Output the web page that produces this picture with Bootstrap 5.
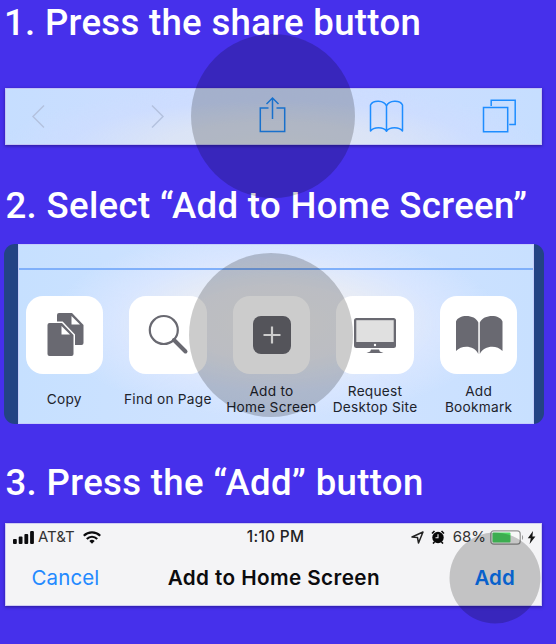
<!DOCTYPE html>
<html lang="en">
<head>
<meta charset="utf-8">
<meta name="viewport" content="width=device-width, initial-scale=1">
<title>Add to Home Screen</title>
<link href="https://cdn.jsdelivr.net/npm/bootstrap@5.3.0/dist/css/bootstrap.min.css" rel="stylesheet">
<style>
body{background:#4630eb;width:556px;height:644px;overflow:hidden;font-family:Inter,"Liberation Sans",sans-serif}
.step-title{font:500 36.6px/44px Roboto,sans-serif;letter-spacing:.33px;white-space:nowrap;color:#fff;padding-left:5.5px}
.title-1{height:87.5px;letter-spacing:.3px;padding:1px 0 0 4px}
.title-2{height:99px;padding-top:39px}
.title-3{height:99px;padding-top:37px}
.ios-toolbar{width:537px;height:57.5px;margin-left:5px;border:1px solid #c3c4f4;box-shadow:0 1px 3px rgba(20,10,90,.55);background:radial-gradient(ellipse 270px 62px at 50% 105%,#e0e6f2 0,#dbe4f6 40%,rgba(206,221,255,.7) 75%,rgba(200,222,255,0) 100%),linear-gradient(90deg,#c6deff,#cdddff 35%,#cdddff 65%,#c6deff)}
.ios-toolbar svg{flex:none}
.spot{position:absolute;border-radius:50%;background:rgba(0,0,0,.2);pointer-events:none;z-index:2}
.spot-lg{width:164px;height:164px;left:50%;top:50%;transform:translate(-50%,-50%)}
.spot-sm{width:91px;height:91px;left:50%;top:50%;transform:translate(-50%,-50%)}
.share-sheet{width:540.5px;height:180.4px;margin-left:3.5px;padding:0 10.5px 0 14px;background:#234384;border-radius:11px}
.sheet-body{height:100%;border:1px solid #c5cdfb;background:radial-gradient(ellipse 225px 95px at 50% 44%,#f0eff0 0,#eaedf4 40%,rgba(219,231,255,.8) 72%,rgba(203,225,255,0) 100%),linear-gradient(90deg,#c6e0ff,#d2e3ff 50%,#c8e0ff)}
.sheet-rule{height:25px;border-bottom:2px solid #80b0fa}
.tiles{padding:26px 0 0 7px}
.action{width:77.5px;margin-right:26.1px;flex:none}
.tile{width:77.5px;height:77.5px;border-radius:17px;background:#fff}
.action-label{width:104px;height:36px;margin-top:7.5px;font-size:13.7px;line-height:16.5px;letter-spacing:.25px;color:#1d232c;text-align:center;white-space:nowrap}
.prompt{width:537px;height:83px;margin-left:5px;background:#f4f4f6;border:1px solid #cfcdf3;box-shadow:0 1px 3px rgba(20,10,90,.55);color:#0c0c0e}
.status-bar{height:26px;font-size:15px;line-height:26px}
.status-bar>*{flex:1 1 0}
.carrier{padding-left:7px}
.carrier span{margin:0 8px 0 4px;color:#333}
.clock{font-weight:500;font-size:15.4px;letter-spacing:.3px;padding-left:2px;color:#222}
.power{padding-right:5px;color:#333}
.alarm{margin-left:7px}
.charge{margin-left:8px}
.cell{margin:0 3px 0 4px}
.nav-line{height:54px;font-size:20.5px;line-height:55px}
.nav-line>*{flex:1 1 0;white-space:nowrap}
.cancel{color:#2289ff;padding-left:25.5px;letter-spacing:.1px}
.prompt-title{font-weight:600;font-size:20.7px;letter-spacing:.4px;flex:0 0 auto!important;padding-left:1.5px}
.add-wrap{padding-right:26.3px}
.add-link{color:#0a7aff;font-weight:600}
</style>
</head>
<body>
<main>
<section>
<h2 class="step-title title-1 m-0">1. Press the share button</h2>
<div class="ios-toolbar d-flex align-items-center">
<svg width="66" height="56" viewBox="0 0 66 56" fill="none" stroke="#b4c2df" stroke-width="1.5"><path d="M38 17.5 27 28.5 38 39.5"/></svg>
<svg width="120" height="56" viewBox="0 0 120 56" fill="none" stroke="#b4c2df" stroke-width="1.5"><path d="M80 17.5 91 28.5 80 39.5"/></svg>
<div class="position-relative d-flex">
<svg width="161" height="56" viewBox="0 0 161 56" fill="none" stroke="#1e8dff" stroke-width="1.5"><path d="M76.500 20h-8.200v23.500h24.400V20H84.500M80.500 31V10.500M74.500 16l6-6 6 6"/></svg>
<div class="spot spot-lg"></div>
</div>
<svg width="67" height="56" viewBox="0 0 67 56" fill="none" stroke="#1e8dff" stroke-width="1.500" stroke-linejoin="round"><path d="M33.500 18c-2.500-6.200-13.500-6.200-16-1v26c3-4.500 13-4.500 16 0 3-4.500 13-4.500 16 0V17c-2.500-5.200-13.500-5.200-16 1v26"/></svg>
<svg width="121" height="56" viewBox="0 0 121 56" fill="none" stroke="#1e8dff" stroke-width="1.500"><path d="M63.500 19.500h24.200v24.200H63.500zM71.200 18v-5.800h24v24.200h-6"/></svg>
</div>
</section>
<section>
<h2 class="step-title title-2 m-0">2. Select “Add to Home Screen”</h2>
<div class="share-sheet">
<div class="sheet-body">
<div class="sheet-rule"></div>
<div class="tiles d-flex">
<div class="action d-flex flex-column align-items-center">
<div class="tile"><svg width="78" height="78" viewBox="0 0 78 78"><path d="M33 17h13l11.500 12v18a2 2 0 0 1-2 2H33a2 2 0 0 1-2-2V19a2 2 0 0 1 2-2z" fill="#696971"/><path d="M45.500 20v8.500H54z" fill="#fff"/><path d="M23.500 27H36l11.500 12v19a2 2 0 0 1-2 2h-22a2 2 0 0 1-2-2V29a2 2 0 0 1 2-2z" fill="#696971" stroke="#fff" stroke-width="3" paint-order="stroke"/><path d="M35.500 30v8.500H44z" fill="#fff"/></svg></div>
<div class="action-label d-flex align-items-center justify-content-center">Copy</div>
</div>
<div class="action d-flex flex-column align-items-center">
<div class="tile"><svg width="78" height="78" viewBox="0 0 78 78" fill="none" stroke="#696971"><circle cx="34.800" cy="34" r="14" stroke-width="2.200"/><path d="m45 44 11.500 11.500" stroke-width="4" stroke-linecap="round"/></svg></div>
<div class="action-label d-flex align-items-center justify-content-center">Find on Page</div>
</div>
<div class="action d-flex flex-column align-items-center">
<div class="tile position-relative"><svg width="78" height="78" viewBox="0 0 78 78"><rect x="20" y="20" width="38" height="38" rx="8" fill="#696971"/><path d="M39 30.500v17M30.500 39h17" stroke="#fff" stroke-width="2.200"/></svg><div class="spot spot-lg"></div></div>
<div class="action-label d-flex align-items-center justify-content-center">Add to<br>Home Screen</div>
</div>
<div class="action d-flex flex-column align-items-center">
<div class="tile"><svg width="78" height="78" viewBox="0 0 78 78"><rect x="18" y="22" width="42" height="30" rx="2.500" fill="#696971"/><rect x="20.300" y="24.200" width="37.400" height="21.800" fill="#e0e0e0"/><circle cx="39" cy="49" r="1.200" fill="#fff"/><path d="M35 53.500h8l.8 2 3.700 1.500h-17l3.700-1.500z" fill="#696971"/></svg></div>
<div class="action-label d-flex align-items-center justify-content-center">Request<br>Desktop Site</div>
</div>
<div class="action d-flex flex-column align-items-center">
<div class="tile"><svg width="78" height="78" viewBox="0 0 78 78" fill="#696971"><path d="M16 25.500c2.500-7.500 19-7.500 22.300 1V58C34.500 49.500 22 48.500 16 55zM62.500 25.500c-2.500-7.500-19-7.500-22.700 1V58C44 49.500 56.500 48.500 62.500 55z"/></svg></div>
<div class="action-label d-flex align-items-center justify-content-center">Add<br>Bookmark</div>
</div>
</div>
</div>
</div>
</section>
<section>
<h2 class="step-title title-3 m-0">3. Press the “Add” button</h2>
<div class="prompt">
<div class="status-bar d-flex">
<div class="carrier d-flex align-items-center">
<svg width="21" height="13" viewBox="0 0 21 13" fill="#0c0c0e"><rect y="8" width="3.800" height="5" rx="1"/><rect x="5.700" y="5.500" width="3.800" height="7.500" rx="1"/><rect x="11.400" y="3" width="3.800" height="10" rx="1"/><rect x="17.100" width="3.800" height="13" rx="1"/></svg>
<span>AT&amp;T</span>
<svg width="18" height="13" viewBox="0 0 18 13" fill="none" stroke="#0c0c0e" stroke-width="2.200"><path d="M.8 4.800c4.600-4.600 11.800-4.600 16.400 0M3.800 8c3-3 7.400-3 10.400 0"/><path d="M9 12.800 6.300 10a3.800 3.800 0 0 1 5.400 0z" fill="#0c0c0e" stroke="none"/></svg>
</div>
<div class="clock text-center">1:10 PM</div>
<div class="power d-flex align-items-center justify-content-end">
<svg width="13" height="13" viewBox="0 0 13 13" fill="none" stroke="#222" stroke-width="1.500" stroke-linejoin="round"><path d="M1 6 12 1 7.500 12 6.500 6.500z"/></svg>
<svg class="alarm" width="14" height="14" viewBox="0 0 14 14"><circle cx="7" cy="7.500" r="5.700" fill="#080808"/><path d="M1 3.500 3.500 1M13 3.500 10.500 1M3.500 12 2 13.500M10.500 12l1.500 1.500" stroke="#080808" stroke-width="1.600"/><path d="M7 4.300v3.500H4.500" fill="none" stroke="#f4f4f6" stroke-width="1.100"/></svg>
<span class="charge">68%</span>
<svg class="cell" width="34" height="15" viewBox="0 0 34 15"><rect x=".8" y=".8" width="29.400" height="13.400" rx="3" fill="#f8f8f8" stroke="#929292" stroke-width="1.200"/><rect x="2.500" y="2.600" width="18" height="9.800" rx="1" fill="#4cd964"/><path d="M32 5v5c1.500-1 1.500-4 0-5" fill="#999"/></svg>
<svg width="9" height="13" viewBox="0 0 9 13" fill="#151515"><path d="M6 0 .8 7.200h3L2.600 13 8.400 5.400h-3z"/></svg>
</div>
</div>
<div class="nav-line d-flex">
<div class="cancel">Cancel</div>
<div class="prompt-title">Add to Home Screen</div>
<div class="add-wrap text-end"><span class="add-link position-relative d-inline-block">Add<span class="spot spot-sm"></span></span></div>
</div>
</div>
</section>
</main>
<script src="https://cdn.jsdelivr.net/npm/bootstrap@5.3.0/dist/js/bootstrap.bundle.min.js"></script>
</body>
</html>
